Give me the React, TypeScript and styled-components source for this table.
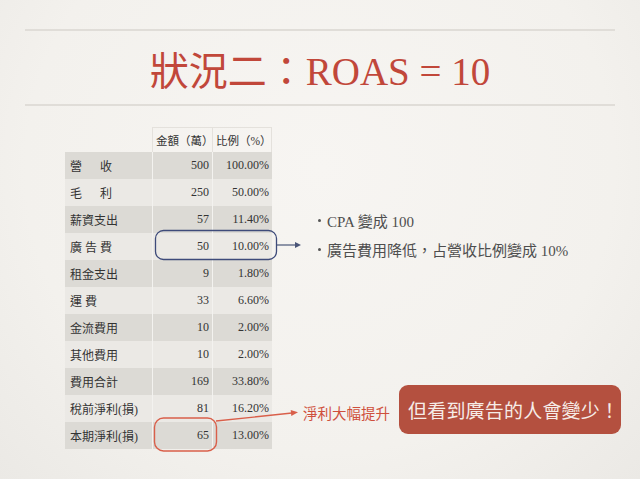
import React from "react";
import styled, { createGlobalStyle } from "styled-components";

const serif = `"Liberation Serif", "Noto Sans CJK TC", serif`;

const Global = createGlobalStyle`
  html, body { margin: 0; padding: 0; background: #f4f2ee; }
  body { font-family: ${serif}; }
`;

const Slide = styled.div`
  position: relative;
  width: 640px;
  height: 479px;
  overflow: hidden;
  background: radial-gradient(ellipse at 50% 35%, #f7f5f2 0%, #f3f1ed 65%, #ebe9e5 100%);
  display: flex;
  flex-direction: column;
`;

const Header = styled.header`
  padding: 29px 25px 0;
  display: flex;
  flex-direction: column;
`;

const Rule = styled.div`
  height: 2px;
  background: #e0ddd8;
`;

const Title = styled.h1`
  margin: 0;
  height: 73px;
  display: flex;
  align-items: center;
  justify-content: center;
  font-family: ${serif};
  font-weight: normal;
  font-size: 39px;
  color: #c1473a;
`;

const Body = styled.main`
  display: flex;
  align-items: flex-start;
  padding: 21px 0 0 65px;
`;

const Table = styled.div`
  display: grid;
  grid-template-columns: 87px 60px 60px;
  grid-template-rows: 25px;
  grid-auto-rows: 27px;
  width: 207px;
  font-size: 12px;
  color: #333;
`;

type Shade = "none" | "dark" | "light";

const Cell = styled.div<{ $shade: Shade; $num?: boolean; $sep?: boolean; $head?: boolean; $last?: boolean }>`
  display: flex;
  align-items: center;
  justify-content: ${(p) => (p.$num ? "flex-end" : "flex-start")};
  padding: ${(p) => (p.$num ? "0 3px 0 0" : p.$head ? "0 0 0 3px" : "0 0 0 5px")};
  background: ${(p) => (p.$shade === "dark" ? "#dcdad5" : p.$shade === "light" ? "#ebe9e5" : "transparent")};
  border-left: ${(p) => (p.$sep ? "1px solid #f3f2ef" : p.$head ? "1px solid #e4e1dc" : "none")};
  border-top: ${(p) => (p.$head ? "1px solid #e4e1dc" : "none")};
  border-right: ${(p) => (p.$head && p.$last ? "1px solid #e4e1dc" : "none")};
  font-size: ${(p) => (p.$head ? "11.5px" : "12px")};
  white-space: pre;
`;

const RightCol = styled.section`
  display: flex;
  flex-direction: column;
  margin-left: 31px;
  flex: 1;
`;

const Bullets = styled.ul`
  list-style: none;
  margin: 79px 0 0;
  padding: 0 0 0 15px;
  color: #4e4e4e;
  font-size: 15px;
`;

const Bullet = styled.li`
  height: 29px;
  display: flex;
  align-items: center;
  white-space: pre;
`;

const Dot = styled.span`
  width: 3px;
  height: 3px;
  border-radius: 50%;
  background: #555;
  margin-right: 6px;
`;

const CalloutRow = styled.div`
  display: flex;
  align-items: center;
  gap: 9px;
  margin-top: 121px;
`;

const RedNote = styled.span`
  color: #cf4f3c;
  font-size: 14.5px;
  margin-top: 5px;
`;

const Callout = styled.div`
  width: 222px;
  height: 49px;
  box-sizing: border-box;
  border-radius: 9px;
  background: #b4503f;
  color: #f6ece7;
  font-size: 19px;
  display: flex;
  align-items: center;
  padding-left: 9px;
  letter-spacing: 0.2px;
`;

const Overlay = styled.svg`
  position: absolute;
  left: 0;
  top: 0;
  pointer-events: none;
`;

const rows: [string, string, string][] = [
  ["營      收", "500", "100.00%"],
  ["毛      利", "250", "50.00%"],
  ["薪資支出", "57", "11.40%"],
  ["廣 告 費", "50", "10.00%"],
  ["租金支出", "9", "1.80%"],
  ["運 費", "33", "6.60%"],
  ["金流費用", "10", "2.00%"],
  ["其他費用", "10", "2.00%"],
  ["費用合計", "169", "33.80%"],
  ["稅前淨利(損)", "81", "16.20%"],
  ["本期淨利(損)", "65", "13.00%"],
];

export default function App() {
  return (
    <>
      <Global />
      <Slide>
        <Header>
          <Rule />
          <Title>狀況二：ROAS = 10</Title>
          <Rule />
        </Header>
        <Body>
          <Table>
            <Cell $shade="none" />
            <Cell $shade="none" $head>金額（萬）</Cell>
            <Cell $shade="none" $head $last>比例（%）</Cell>
            {rows.map(([label, amt, pct], i) => {
              const shade: Shade = i % 2 === 0 ? "dark" : "light";
              return (
                <React.Fragment key={label}>
                  <Cell $shade={shade}>{label}</Cell>
                  <Cell $shade={shade} $num $sep>{amt}</Cell>
                  <Cell $shade={shade} $num $sep>{pct}</Cell>
                </React.Fragment>
              );
            })}
          </Table>
          <RightCol>
            <Bullets>
              <Bullet><Dot />CPA 變成 100</Bullet>
              <Bullet><Dot />廣告費用降低，占營收比例變成 10%</Bullet>
            </Bullets>
            <CalloutRow>
              <RedNote>淨利大幅提升</RedNote>
              <Callout>但看到廣告的人會變少！</Callout>
            </CalloutRow>
          </RightCol>
        </Body>
        <Overlay width="640" height="479" viewBox="0 0 640 479">
          <rect x="155.5" y="230.5" width="121" height="29" rx="8" fill="none" stroke="#3e4b7a" strokeWidth="1.3" />
          <line x1="277" y1="245" x2="296" y2="245" stroke="#4a5578" strokeWidth="1.2" />
          <polygon points="301,245 295,242 295,248" fill="#4a5578" />
          <rect x="154.5" y="418" width="62" height="33" rx="9" fill="none" stroke="#d95f4a" strokeWidth="1.4" />
          <line x1="216" y1="421" x2="292" y2="413" stroke="#d95f4a" strokeWidth="1.3" />
          <polygon points="298,412.3 291.3,416 290.7,410" fill="#d95f4a" />
        </Overlay>
      </Slide>
    </>
  );
}
